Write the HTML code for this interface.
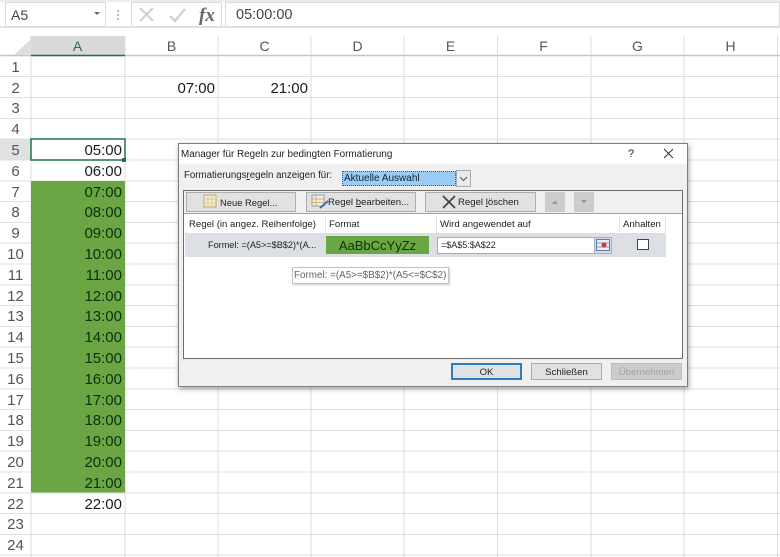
<!DOCTYPE html>
<html><head><meta charset="utf-8"><style>
*{box-sizing:border-box}
html,body{margin:0;padding:0;background:#fff}
#p{position:relative;width:780px;height:557px;overflow:hidden;background:#fff;font-family:"Liberation Sans",sans-serif;color:#222;filter:blur(.35px)}
#p div{position:absolute;white-space:nowrap}
.h{top:36px;height:20px;width:93px;text-align:center;font-size:14px;line-height:21px;color:#555}
.r{left:0;width:31px;text-align:center;font-size:15px;line-height:21px;height:21px;color:#555}
.t{left:31px;width:91px;text-align:right;font-size:15px;line-height:21px;height:21px;color:#1c1c1c}
.g{color:#0f2f0a}
.b{height:20px;background:#e1e1e1;border:1px solid #adadad;font-size:9.6px;line-height:20px;color:#222}
.d{font-size:9.6px;color:#222}
u{text-decoration:underline}
</style></head><body><div id="p">
<!-- top bar -->
<div style="left:0;top:0;width:780px;height:2px;background:#ececec"></div>
<div style="left:0;top:26px;width:780px;height:2px;background:#e2e2e2"></div>
<div style="left:5px;top:2px;width:101px;height:25px;background:#fff;border:1px solid #dcdcdc;font-size:14px;line-height:25px;padding-left:5px;color:#444">A5</div>
<div style="left:94px;top:12px;width:0;height:0;border-left:3px solid transparent;border-right:3px solid transparent;border-top:3px solid #666"></div>
<div style="left:117px;top:10px;width:2px;height:2px;background:#bbb"></div>
<div style="left:117px;top:14px;width:2px;height:2px;background:#bbb"></div>
<div style="left:117px;top:18px;width:2px;height:2px;background:#bbb"></div>
<div style="left:131px;top:2px;width:91px;height:25px;background:#fff;border:1px solid #dcdcdc"></div>
<div style="left:225px;top:2px;width:555px;height:25px;background:#fff;border:1px solid #dcdcdc;font-size:14.500px;line-height:25px;padding-left:10px;color:#444">05:00:00</div>
<svg style="position:absolute;left:131px;top:2px" width="91" height="25"><path d="M9 6 L22 19 M22 6 L9 19" stroke="#d0d0d0" stroke-width="2" fill="none"/><path d="M39 14 L44 19 L54 7" stroke="#d0d0d0" stroke-width="2.400" fill="none"/><text x="68" y="19" font-family="Liberation Serif" font-style="italic" font-weight="bold" font-size="19" fill="#666">fx</text></svg>

<!-- grid -->
<svg style="position:absolute;left:0;top:36px" width="780" height="521">
<rect x="31" y="0" width="94" height="20" fill="#d9d9d9"/>
<rect x="0" y="103" width="31" height="21" fill="#e1e1e1"/>
<path d="M31 0V521M125 0V521M218 0V521M311 0V521M404 0V521M497.500 0V521M591 0V521M684 0V521M777.500 0V521" stroke="#dcdcdc" fill="none"/>
<path d="M0 40.500H780M0 61.500H780M0 82.500H780M0 103H780M0 124H780M0 145H780M0 165.500H780M0 186.500H780M0 207H780M0 228H780M0 249H780M0 269.500H780M0 290.500H780M0 311H780M0 332H780M0 353H780M0 373.500H780M0 394.500H780M0 415H780M0 436H780M0 457H780M0 477.500H780M0 498.500H780M0 519H780" stroke="#dfdfdf" fill="none"/>
<path d="M0 19.500H780" stroke="#c6c6c6" stroke-width="1.500" fill="none"/>
<path d="M14 19 L31 19 L31 3 Z" fill="#dedede"/>
<rect x="31" y="145" width="94" height="311.500" fill="#6aa644"/>
<path d="M31 19.500H125" stroke="#217346" stroke-width="1.500" fill="none"/>
<rect x="31" y="103" width="94" height="21" fill="#fff" stroke="#217346" stroke-width="1.500"/>
<rect x="122" y="122" width="4" height="4" fill="#217346"/>
</svg>

<div class="h" style="left:31px;color:#217346">A</div><div class="h" style="left:125px">B</div><div class="h" style="left:218px">C</div><div class="h" style="left:311px">D</div><div class="h" style="left:404px">E</div><div class="h" style="left:497px">F</div><div class="h" style="left:591px">G</div><div class="h" style="left:684px">H</div>

<div class="r" style="top:57px">1</div><div class="r" style="top:78px">2</div><div class="r" style="top:98px">3</div><div class="r" style="top:119px">4</div><div class="r" style="top:140px">5</div><div class="r" style="top:161px">6</div><div class="r" style="top:182px">7</div><div class="r" style="top:202px">8</div><div class="r" style="top:223px">9</div><div class="r" style="top:244px">10</div><div class="r" style="top:265px">11</div><div class="r" style="top:286px">12</div><div class="r" style="top:306px">13</div><div class="r" style="top:327px">14</div><div class="r" style="top:348px">15</div><div class="r" style="top:369px">16</div><div class="r" style="top:390px">17</div><div class="r" style="top:410px">18</div><div class="r" style="top:431px">19</div><div class="r" style="top:452px">20</div><div class="r" style="top:473px">21</div><div class="r" style="top:494px">22</div><div class="r" style="top:514px">23</div><div class="r" style="top:535px">24</div>

<div class="t" style="left:124px;top:78px">07:00</div><div class="t" style="left:217px;top:78px">21:00</div>
<div class="t" style="top:140px">05:00</div><div class="t" style="top:161px">06:00</div>
<div class="t g" style="top:182px">07:00</div><div class="t g" style="top:202px">08:00</div><div class="t g" style="top:223px">09:00</div><div class="t g" style="top:244px">10:00</div><div class="t g" style="top:265px">11:00</div><div class="t g" style="top:286px">12:00</div><div class="t g" style="top:306px">13:00</div><div class="t g" style="top:327px">14:00</div><div class="t g" style="top:348px">15:00</div><div class="t g" style="top:369px">16:00</div><div class="t g" style="top:390px">17:00</div><div class="t g" style="top:410px">18:00</div><div class="t g" style="top:431px">19:00</div><div class="t g" style="top:452px">20:00</div><div class="t g" style="top:473px">21:00</div>
<div class="t" style="top:494px">22:00</div>

<!-- dialog -->
<div style="left:178px;top:143px;width:510px;height:244px;background:#f0f0f0;border:1px solid #7d7d7d;box-shadow:1px 2px 5px rgba(0,0,0,.35)"></div>
<div style="left:179px;top:144px;width:508px;height:20px;background:#fff"></div>
<div class="d" style="left:181px;top:147px;font-size:9.900px;line-height:13px;top:148px">Manager für Regeln zur bedingten Formatierung</div>
<div class="d" style="left:628px;top:148px;font-size:11px;line-height:12px">?</div>
<svg style="position:absolute;left:662px;top:147px" width="13" height="13"><path d="M2 2 L11 11 M11 2 L2 11" stroke="#333" stroke-width="1" fill="none"/></svg>
<div class="d" style="left:184px;top:170px;line-height:12px;font-size:9.700px">Formatierungs<u>r</u>egeln anzeigen für:</div>
<div style="left:342px;top:171px;width:114px;height:15px;background:#99cdf5;border:1px dotted #555;font-size:10px;line-height:14px;padding-left:1px;color:#123">Aktuelle Auswahl</div>
<div style="left:456px;top:170px;width:15px;height:17px;background:#eaeaea;border:1px solid #aaa"></div>
<svg style="position:absolute;left:459px;top:175px" width="10" height="8"><path d="M1 2 L4.500 5.500 L8 2" stroke="#555" fill="none"/></svg>

<!-- frame -->
<div style="left:183px;top:190px;width:500px;height:169px;background:#fff;border:1px solid #6e6e6e"></div>
<div style="left:184px;top:191px;width:498px;height:23px;background:#f0f0f0;border-bottom:1px solid #a0a0a0"></div>
<div class="b" style="left:186px;top:192px;width:110px"><span style="position:absolute;left:33px;font-size:9.400px">Neue Regel...</span></div>
<div class="b" style="left:306px;top:192px;width:110px"><span style="position:absolute;left:21px">Regel <u>b</u>earbeiten...</span></div>
<div class="b" style="left:425px;top:192px;width:111px"><span style="position:absolute;left:32px">Regel <u>l</u>öschen</span></div>
<div style="left:545px;top:192px;width:20px;height:20px;background:#ccc"></div>
<div style="left:574px;top:192px;width:20px;height:20px;background:#ccc"></div>
<svg style="position:absolute;left:186px;top:192px" width="420" height="20">
<rect x="18" y="3" width="12" height="12" fill="#f8edc8" stroke="#b9a878"/><path d="M18 7H30M18 11H30M22 3V15M26 3V15" stroke="#d9cba4" fill="none"/>
<rect x="126" y="3" width="12" height="11" fill="#e9f0f8" stroke="#8aa0b8"/><path d="M126 7H138M126 10.500H138M130 3V14" stroke="#e3a95c" fill="none"/><path d="M134 16 L142 9" stroke="#3b6ea5" stroke-width="2" fill="none"/>
<path d="M257 4 L269 16 M269 4 L257 16" stroke="#444" stroke-width="1.700" fill="none"/>
</svg>
<svg style="position:absolute;left:545px;top:192px" width="50" height="20"><path d="M7 12 L10 8.500 L13 12 Z M36 8 L39 11.500 L42 8 Z" fill="#999"/></svg>

<!-- list header -->
<div class="d" style="left:189px;top:219px;line-height:12px">Regel (in angez. Reihenfolge)</div>
<div class="d" style="left:329px;top:219px;line-height:12px">Format</div>
<div class="d" style="left:440px;top:219px;line-height:12px">Wird angewendet auf</div>
<div class="d" style="left:623px;top:219px;line-height:12px">Anhalten</div>
<div style="left:325px;top:216px;width:1px;height:17px;background:#e5e5e5"></div>
<div style="left:436px;top:216px;width:1px;height:17px;background:#e5e5e5"></div>
<div style="left:619px;top:216px;width:1px;height:17px;background:#e5e5e5"></div>
<div style="left:665px;top:216px;width:1px;height:17px;background:#e5e5e5"></div>
<!-- row -->
<div style="left:185px;top:233px;width:481px;height:24px;background:#dcdfe3"></div>
<div class="d" style="left:208px;top:239px;font-size:9.150px;line-height:12px">Formel: =(A5&gt;=$B$2)*(A...</div>
<div style="left:326px;top:236px;width:103px;height:18px;background:#6aa644;text-align:center;font-size:13px;line-height:19px;color:#0f2f0a">AaBbCcYyZz</div>
<div style="left:437px;top:237px;width:175px;height:17px;background:#fff;border:1px solid #a6adb5;font-size:9px;line-height:15px;padding-left:3px">=$A$5:$A$22</div>
<div style="left:594px;top:237px;width:18px;height:17px;background:#d5dbe2;border:1px solid #a6adb5"></div>
<svg style="position:absolute;left:596px;top:239px" width="14" height="13"><rect x="0.500" y="0.500" width="13" height="11" fill="#e8eef5" stroke="#5b7fa5"/><path d="M1 4H13M1 8H13" stroke="#7b9cc0" fill="none"/><circle cx="8" cy="6" r="2.500" fill="#d8343a"/></svg>
<div style="left:637px;top:239px;width:12px;height:11px;background:#fff;border:1px solid #444"></div>
<!-- tooltip -->
<div style="left:292px;top:267px;width:157px;height:17px;background:#fff;border:1px solid #c4c4c4;box-shadow:1px 1px 2px rgba(0,0,0,.2);font-size:9.850px;line-height:15px;padding-left:1px;color:#666">Formel: =(A5&gt;=$B$2)*(A5&lt;=$C$2)</div>

<!-- bottom buttons -->
<div class="b" style="left:451px;top:363px;width:71px;height:17px;border:2px solid #2d7cc0;text-align:center;line-height:16px">OK</div>
<div class="b" style="left:531px;top:363px;width:71px;height:17px;text-align:center;line-height:17px">Schließen</div>
<div class="b" style="left:611px;top:363px;width:71px;height:17px;text-align:center;line-height:17px;background:#ccc;border-color:#bfbfbf;color:#a2a2a2">Übernehmen</div>
</div></body></html>
